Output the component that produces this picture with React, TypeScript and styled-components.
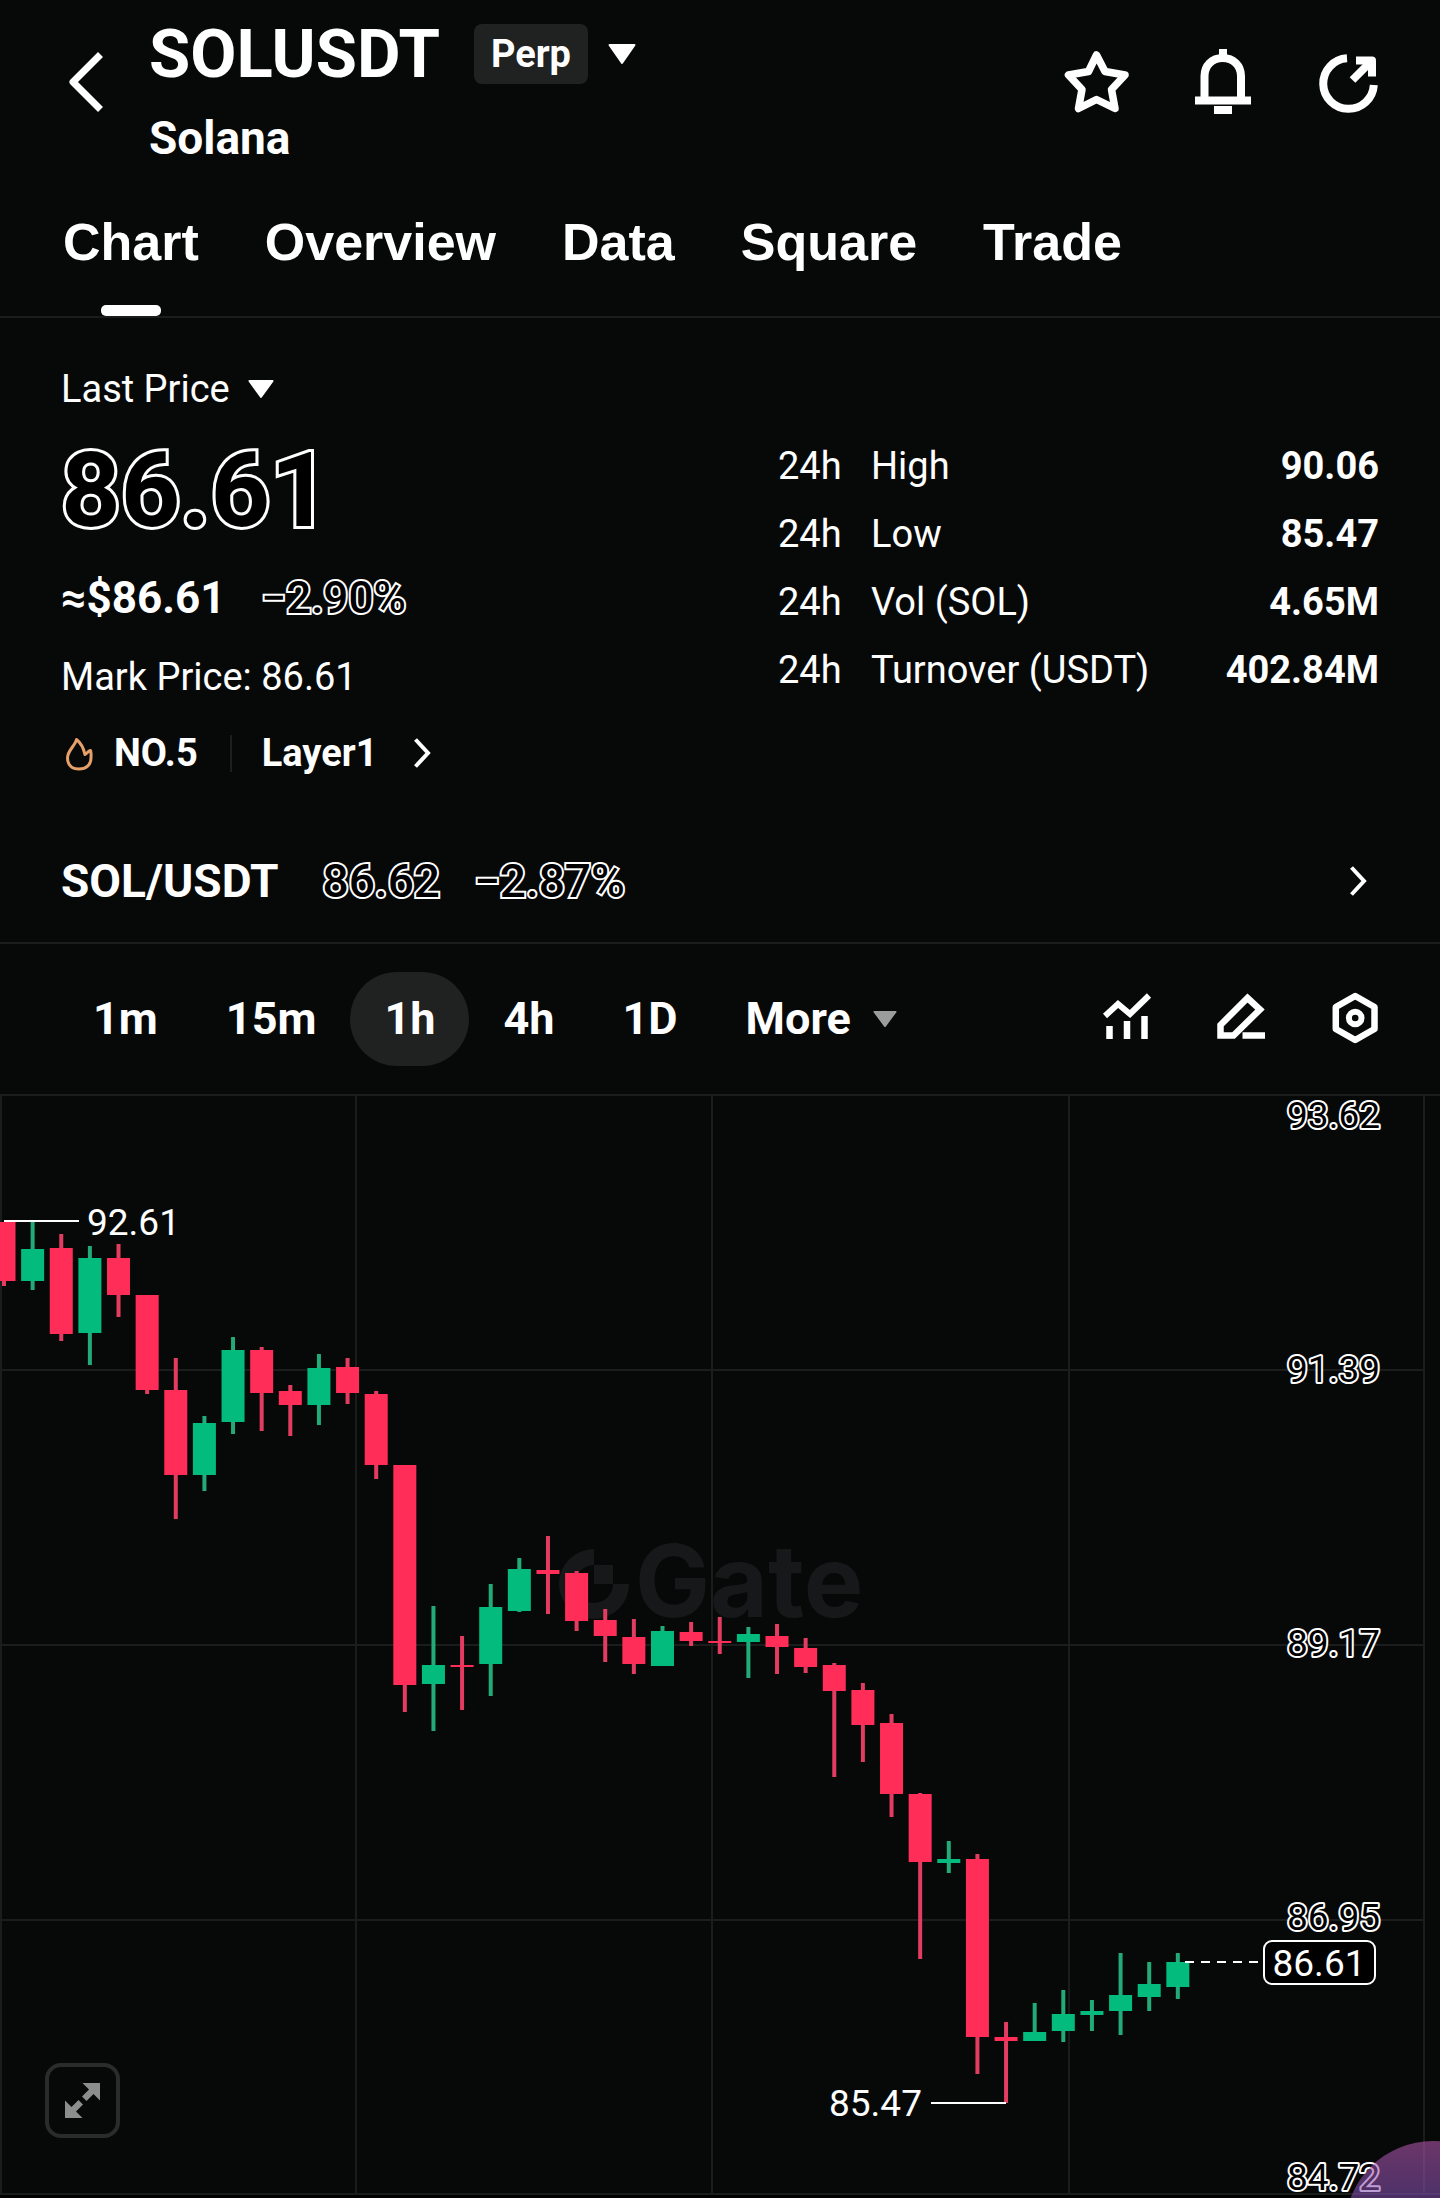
import React, { useState } from "react";
import styled, { createGlobalStyle } from "styled-components";

const GlobalStyle = createGlobalStyle`
  *, *::before, *::after { box-sizing: border-box; }
  html, body { margin: 0; background: #070909; }
  body {
    color: #fff;
    font-family: Roboto, "Liberation Sans", sans-serif;
    font-size: 38px;
    line-height: 44px;
    overflow-x: hidden;
  }
  button {
    margin: 0;
    padding: 0;
    border: 0;
    background: none;
    color: inherit;
    font: inherit;
    cursor: pointer;
  }
  svg { display: block; overflow: visible; flex: none; }
  h1, h2, p { margin: 0; }
`;

const Page = styled.main`
  width: 100%;
  background: #070909;
`;

const Header = styled.header`
  display: flex;
  align-items: flex-start;
  padding: 16px 60px 0;
`;

const BackLink = styled.a`
  display: flex;
  align-items: center;
  width: 89px;
  height: 132px;
  color: #fff;
`;

const Identity = styled.div`
  display: flex;
  flex-direction: column;
  gap: 18px;
  flex: 1;
`;

const TitleRow = styled.div`
  display: flex;
  align-items: center;
  gap: 34px;
`;

const Pair = styled.h1`
  font-size: 67px;
  line-height: 76px;
  font-weight: 700;
`;

const MarketButton = styled.button`
  display: flex;
  align-items: center;
  gap: 20px;
`;

const Badge = styled.span`
  height: 60px;
  padding: 0 17px;
  border-radius: 8px;
  background: #202121;
  line-height: 60px;
  font-weight: 700;
`;

const CoinName = styled.p`
  font-size: 46px;
  line-height: 56px;
  font-weight: 700;
`;

const HeaderActions = styled.div`
  display: flex;
  align-items: center;
  gap: 62px;
  height: 132px;
`;

const Tabs = styled.nav`
  display: flex;
  gap: 66px;
  padding: 0 63px;
  border-bottom: 2px solid #1b1c1c;
`;

const Tab = styled.button`
  display: flex;
  flex-direction: column;
  align-items: center;
  gap: 31px;
  padding-top: 44px;
  font-family: "Liberation Sans", Arial, sans-serif;
  font-size: 52px;
  line-height: 64px;
  font-weight: 700;
`;

const TabBar = styled.span<{ $on: boolean }>`
  width: 60px;
  height: 11px;
  border-radius: 5px;
  background: ${(p) => (p.$on ? "#fff" : "transparent")};
`;

const Ticker = styled.section`
  display: flex;
  justify-content: space-between;
  padding: 49px 61px 44px;
`;

const PriceColumn = styled.div`
  display: flex;
  flex-direction: column;
  align-items: flex-start;
`;

const PriceKind = styled.button`
  display: flex;
  align-items: center;
  gap: 18px;
`;

const outlined = `
  color: #000;
  -webkit-text-stroke: 4px #fff;
  paint-order: stroke fill;
`;

const BigPrice = styled.p`
  ${outlined}
  margin-top: 28px;
  font-size: 104px;
  line-height: 104px;
  font-weight: 700;
  -webkit-text-stroke-width: 6px;
`;

const ChangeRow = styled.div`
  display: flex;
  gap: 36px;
  margin-top: 27px;
  font-size: 44px;
  line-height: 56px;
  font-weight: 700;
`;

const OutlineText = styled.span`
  ${outlined}
  font-weight: 500;
`;

const MarkPrice = styled.p`
  margin-top: 29px;
`;

const RankLink = styled.a`
  display: flex;
  align-items: center;
  margin-top: 32px;
  color: #fff;
  font-weight: 700;
  text-decoration: none;
`;

const Rank = styled.span`
  margin: 0 32px 0 17px;
`;

const Divider = styled.span`
  width: 2px;
  height: 37px;
  margin-right: 30px;
  background: #1d1e1e;
`;

const Category = styled.span`
  margin-right: 36px;
`;

const Stats = styled.table`
  width: 601px;
  margin-top: 65px;
  align-self: flex-start;
  border-collapse: collapse;
`;

const StatRow = styled.tr`
  height: 68px;
`;

const StatPeriod = styled.td`
  width: 93px;
  padding: 0;
`;

const StatLabel = styled.th`
  padding: 0;
  font-weight: 400;
  text-align: left;
  white-space: nowrap;
`;

const StatValue = styled.td`
  padding: 0;
  font-weight: 700;
  text-align: right;
`;

const SpotLink = styled.a`
  display: flex;
  align-items: center;
  height: 125px;
  padding: 0 61px;
  border-bottom: 2px solid #1b1c1c;
  color: #fff;
  font-size: 46px;
  line-height: 56px;
  font-weight: 700;
  text-decoration: none;
`;

const SpotPair = styled.span`
  margin-right: 44px;
`;

const SpotPrice = styled(OutlineText)`
  margin-right: 34px;
`;

const SpotChange = styled(OutlineText)`
  flex: 1;
`;

const Toolbar = styled.div`
  display: flex;
  align-items: center;
  justify-content: space-between;
  height: 152px;
  padding: 0 61px 0 59px;
  border-bottom: 2px solid #1b1c1c;
`;

const Intervals = styled.div`
  display: flex;
`;

const Interval = styled.button<{ $on?: boolean }>`
  display: flex;
  align-items: center;
  gap: 22px;
  height: 94px;
  padding: 0 34px;
  border-radius: 47px;
  background: ${(p) => (p.$on ? "#202121" : "transparent")};
  font-size: 45px;
  line-height: 56px;
  font-weight: 700;
`;

const Tools = styled.div`
  display: flex;
  gap: 66px;
`;

const ChartArea = styled.section`
  position: relative;
`;

const Plot = styled.svg`
  width: 100%;
  height: auto;

  text {
    font-family: Roboto, "Liberation Sans", sans-serif;
    font-size: 37px;
    fill: #fff;
  }
  .axis {
    fill: #000;
    stroke: #fff;
    stroke-width: 4px;
    stroke-linejoin: round;
    paint-order: stroke fill;
    text-anchor: end;
  }
  .brand {
    font-family: Inter, sans-serif;
    font-size: 100px;
    font-weight: 700;
    fill: #161819;
  }
`;

const ExpandButton = styled.button`
  position: absolute;
  left: 45px;
  bottom: 60px;
  display: flex;
  align-items: center;
  justify-content: center;
  width: 75px;
  height: 75px;
  border: 4px solid #2a2b2b;
  border-radius: 16px;
`;

const BubbleWindow = styled.span`
  position: absolute;
  right: 0;
  bottom: 0;
  width: 95px;
  height: 57px;
  overflow: hidden;
`;

const Bubble = styled.span`
  display: block;
  width: 176px;
  height: 176px;
  border-radius: 50%;
  background: linear-gradient(rgba(185, 88, 176, 0.57), rgba(125, 80, 178, 0.57) 35%);
`;

type CaretProps = { width: number; height: number; color?: string };

function Caret({ width, height, color = "#fff" }: CaretProps) {
  return (
    <svg width={width} height={height} viewBox="0 0 28 20" preserveAspectRatio="none" aria-hidden="true">
      <path d="M1.5 1H26.5L14 19Z" fill={color} stroke={color} strokeWidth="2" strokeLinejoin="round" />
    </svg>
  );
}

function ChevronRight() {
  return (
    <svg width="30" height="30" viewBox="0 0 30 30" fill="none" stroke="#fff" strokeWidth="4" aria-hidden="true">
      <path d="M2.5 1.5L15 15L2.5 28.5" />
    </svg>
  );
}

function BackIcon() {
  return (
    <svg width="48" height="62" viewBox="0 0 48 62" fill="none" stroke="#fff" strokeWidth="7" strokeLinejoin="round" aria-hidden="true">
      <path d="M40.5 3.5L13 31L40.5 58.5" />
    </svg>
  );
}

function StarIcon() {
  return (
    <svg width="64" height="64" viewBox="0 0 64 64" fill="none" stroke="#fff" strokeWidth="7.5" strokeLinejoin="round" aria-hidden="true">
      <path d="M32.5 5L41 21.5L61 25L47.5 39.5L51 58.5L32.5 49.5L14.5 58.5L18 39.5L4.5 25L24.5 21.5Z" />
    </svg>
  );
}

function BellIcon() {
  return (
    <svg width="64" height="64" viewBox="0 0 64 64" fill="none" stroke="#fff" strokeWidth="8" aria-hidden="true">
      <path d="M14.5 49V26C14.5 15.5 22 8 32.7 8S51 15.5 51 26V49" />
      <path d="M5 50.5H61M24 60H42M33 -1V8" />
    </svg>
  );
}

function ShareIcon() {
  return (
    <svg width="64" height="64" viewBox="0 0 64 64" fill="none" stroke="#fff" strokeWidth="8" aria-hidden="true">
      <path d="M31 8.3A25.3 25.3 0 1 0 57.8 35" />
      <path d="M40 10.5H56V26.5" strokeLinejoin="round" />
      <path d="M55 11.5L36.5 30" />
    </svg>
  );
}

function FlameIcon() {
  return (
    <svg width="36" height="36" viewBox="0 0 36 36" fill="none" stroke="#e8a06a" strokeWidth="3" strokeLinejoin="round" aria-hidden="true">
      <path d="M15.5 4.5C14 11 6.5 15.5 6.5 23C6.5 30 11 34 18 34C25 34 30 30 30 23C30 20 30.5 18 29.5 15.5C27 16 26 18.5 24 19.5C22.5 13 20 8 15.5 4.5Z" />
    </svg>
  );
}

function IndicatorIcon() {
  return (
    <svg width="48" height="48" viewBox="0 0 48 48" fill="none" stroke="#fff" strokeWidth="6" aria-hidden="true">
      <path d="M2 21L15 9L27 19L46 0.5" />
      <path d="M6.5 31V44M24 26V44M41.5 21V44" strokeWidth="6.5" />
    </svg>
  );
}

function DrawIcon() {
  return (
    <svg width="48" height="48" viewBox="0 0 48 48" fill="none" stroke="#fff" strokeWidth="6.5" strokeLinejoin="round" aria-hidden="true">
      <path d="M30.5 3L43 14.5L16.5 40.5H3.5V30Z" strokeLinejoin="miter" />
      <path d="M25.5 40.5H48" />
    </svg>
  );
}

function SettingsIcon() {
  return (
    <svg width="48" height="48" viewBox="0 0 48 48" fill="none" stroke="#fff" strokeWidth="6.5" strokeLinejoin="round" aria-hidden="true">
      <path d="M24.2 1L43.5 12V34L24.2 45L4.8 34V12Z" />
      <circle cx="24.2" cy="23" r="6.3" strokeWidth="6" />
    </svg>
  );
}

function ExpandIcon() {
  return (
    <svg width="35" height="35" viewBox="0 0 35 35" fill="#8c8d8d" aria-hidden="true">
      <path d="M17.5 0H35V17.5L28.5 11L21.5 18L17 13.5L24 6.5Z" />
      <path d="M17.5 35H0V17.5L6.5 24L13.5 17L18 21.5L11 28.5Z" />
    </svg>
  );
}

const STATS = [
  ["High", "90.06"],
  ["Low", "85.47"],
  ["Vol (SOL)", "4.65M"],
  ["Turnover (USDT)", "402.84M"],
];

const TABS = ["Chart", "Overview", "Data", "Square", "Trade"];
const INTERVALS = ["1m", "15m", "1h", "4h", "1D"];

// One candle per hour: direction, wick top, body top, body bottom, wick bottom.
type Candle = ["up" | "down", number, number, number, number];

const CANDLES: Candle[] = [
  ["down", 126, 126, 185, 190], ["up", 124, 153, 185, 194], ["down", 138, 152, 238, 245],
  ["up", 150, 162, 237, 269], ["down", 148, 162, 199, 221], ["down", 199, 199, 294, 298],
  ["down", 262, 294, 379, 423], ["up", 320, 327, 379, 395], ["up", 241, 254, 326, 338],
  ["down", 251, 254, 297, 335], ["down", 289, 295, 309, 340], ["up", 258, 272, 309, 329],
  ["down", 262, 271, 297, 308], ["down", 295, 298, 369, 383], ["down", 369, 369, 589, 616],
  ["up", 510, 569, 588, 635], ["down", 540, 569, 571, 614], ["up", 488, 511, 568, 600],
  ["up", 462, 473, 515, 516], ["down", 440, 474, 478, 518], ["down", 475, 477, 525, 535],
  ["down", 513, 524, 540, 566], ["down", 523, 541, 568, 578], ["up", 530, 535, 570, 570],
  ["down", 526, 536, 545, 550], ["down", 521, 545, 547, 558], ["up", 531, 538, 546, 582],
  ["down", 528, 540, 551, 578], ["down", 542, 552, 571, 577], ["down", 567, 569, 595, 681],
  ["down", 587, 594, 629, 666], ["down", 618, 627, 698, 721], ["down", 697, 698, 766, 863],
  ["up", 745, 763, 767, 777], ["down", 758, 763, 941, 978], ["down", 926, 941, 945, 1007],
  ["up", 907, 936, 945, 945], ["up", 894, 918, 935, 946], ["up", 904, 915, 919, 935],
  ["up", 857, 899, 915, 939], ["up", 866, 888, 901, 915], ["up", 857, 866, 891, 903],
];

const STEP = 28.63;
const COLORS = {
  up: { body: "#02bb7c", wick: "#22ab78" },
  down: { body: "#ff2d58", wick: "#e23c60" },
};

const AXIS: [string, number][] = [
  ["93.62", 32],
  ["91.39", 286],
  ["89.17", 560],
  ["86.95", 834],
  ["84.72", 1094],
];

function CandleChart() {
  return (
    <Plot viewBox="0 0 1440 1102" role="img" aria-label="SOLUSDT hourly candles">
      <g stroke="#1b1d1d" strokeWidth="2">
        {[1, 356, 712, 1069, 1424].map((x) => (
          <line key={x} x1={x} x2={x} y1="0" y2="1098" />
        ))}
        {[274, 549, 824].map((y) => (
          <line key={y} x1="0" x2="1424" y1={y} y2={y} />
        ))}
        <line x1="0" x2="1440" y1="1098" y2="1098" />
      </g>
      <rect y="1099" width="1440" height="3" fill="#000" />
      <g fill="#161819">
        <path d="M594 453A35 35 0 1 0 629 488H613A19 19 0 1 1 594 469Z" />
        <rect x="594" y="469" width="19" height="19" />
        <text className="brand" x="635" y="521">Gate</text>
      </g>
      {CANDLES.map(([kind, high, top, bottom, low], i) => {
        const x = 4 + i * STEP;
        return (
          <g key={i}>
            <rect x={x - 2} y={high} width="4" height={low - high} fill={COLORS[kind].wick} />
            <rect x={x - 11.5} y={top} width="23" height={bottom - top} fill={COLORS[kind].body} />
          </g>
        );
      })}
      <g stroke="#fff" strokeWidth="2" fill="none">
        <line x1="4" x2="79" y1="125" y2="125" />
        <line x1="931" x2="1006" y1="1007" y2="1007" />
        <line x1="1185" x2="1262" y1="866" y2="866" strokeDasharray="9 7" />
        <rect x="1264" y="845" width="111" height="43" rx="8" fill="#000" />
      </g>
      <text x="87" y="139">92.61</text>
      <text x="829" y="1020">85.47</text>
      <text x="1319" y="880" textAnchor="middle">86.61</text>
      {AXIS.map(([label, y]) => (
        <text key={label} className="axis" x="1380" y={y}>{label}</text>
      ))}
    </Plot>
  );
}

export default function App() {
  const [tab, setTab] = useState("Chart");
  const [interval, setInterval] = useState("1h");

  return (
    <>
      <GlobalStyle />
      <Page>
        <Header>
          <BackLink href="#back" aria-label="Back">
            <BackIcon />
          </BackLink>
          <Identity>
            <TitleRow>
              <Pair>SOLUSDT</Pair>
              <MarketButton>
                <Badge>Perp</Badge>
                <Caret width={28} height={20} />
              </MarketButton>
            </TitleRow>
            <CoinName>Solana</CoinName>
          </Identity>
          <HeaderActions>
            <button aria-label="Add to favorites"><StarIcon /></button>
            <button aria-label="Price alert"><BellIcon /></button>
            <button aria-label="Share"><ShareIcon /></button>
          </HeaderActions>
        </Header>

        <Tabs>
          {TABS.map((name) => (
            <Tab key={name} onClick={() => setTab(name)}>
              {name}
              <TabBar $on={name === tab} />
            </Tab>
          ))}
        </Tabs>

        <Ticker>
          <PriceColumn>
            <PriceKind>
              Last Price
              <Caret width={26} height={18} />
            </PriceKind>
            <BigPrice>86.61</BigPrice>
            <ChangeRow>
              <span>≈$86.61</span>
              <OutlineText>−2.90%</OutlineText>
            </ChangeRow>
            <MarkPrice>Mark Price: 86.61</MarkPrice>
            <RankLink href="#layer1">
              <FlameIcon />
              <Rank>NO.5</Rank>
              <Divider />
              <Category>Layer1</Category>
              <ChevronRight />
            </RankLink>
          </PriceColumn>
          <Stats>
            <tbody>
              {STATS.map(([label, value]) => (
                <StatRow key={label}>
                  <StatPeriod>24h</StatPeriod>
                  <StatLabel scope="row">{label}</StatLabel>
                  <StatValue>{value}</StatValue>
                </StatRow>
              ))}
            </tbody>
          </Stats>
        </Ticker>

        <SpotLink href="#spot">
          <SpotPair>SOL/USDT</SpotPair>
          <SpotPrice>86.62</SpotPrice>
          <SpotChange>−2.87%</SpotChange>
          <ChevronRight />
        </SpotLink>

        <Toolbar>
          <Intervals>
            {INTERVALS.map((name) => (
              <Interval key={name} $on={name === interval} onClick={() => setInterval(name)}>
                {name}
              </Interval>
            ))}
            <Interval>
              More
              <Caret width={24} height={16} color="#9b9d9d" />
            </Interval>
          </Intervals>
          <Tools>
            <button aria-label="Indicators"><IndicatorIcon /></button>
            <button aria-label="Drawing tools"><DrawIcon /></button>
            <button aria-label="Chart settings"><SettingsIcon /></button>
          </Tools>
        </Toolbar>

        <ChartArea>
          <CandleChart />
          <ExpandButton aria-label="Full screen">
            <ExpandIcon />
          </ExpandButton>
          <BubbleWindow>
            <Bubble />
          </BubbleWindow>
        </ChartArea>
      </Page>
    </>
  );
}
